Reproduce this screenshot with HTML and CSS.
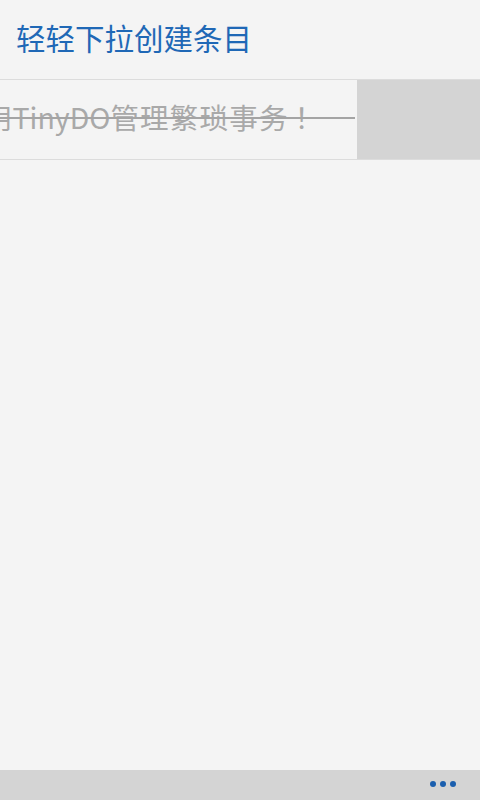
FILE: index.html
```html
<!DOCTYPE html>
<html lang="zh-CN">
<head>
<meta charset="UTF-8">
<title>TinyDO</title>
<link rel="stylesheet" href="styles.css">
</head>
<body>
<div class="app">
  <h1 class="tip">轻轻下拉创建条目</h1>
  <div class="lista">
    <div class="item">
      <div class="item-corpo feito"><span class="texto">用TinyDO<span class="cjk">管理繁琐事务</span><span class="excl">！</span></span></div>
      <div class="item-acao"></div>
    </div>
  </div>
  <div class="barra">
    <span class="mais"><i></i><i></i><i></i></span>
  </div>
</div>
</body>
</html>
```

FILE: styles.css
```css
body { margin: 0; background: #f4f4f4; font-family: "Noto Sans CJK SC", "Open Sans", sans-serif; }
.app { height: 800px; display: flex; flex-direction: column; }
.tip { margin: 0; padding: 13px 16px 0; height: 66px; font-size: 29.5px; font-weight: 400; color: #1f68b6; line-height: 48px; }
.lista { flex: 1; }
.item { display: flex; height: 79px; border-top: 1px solid #dcdcdc; border-bottom: 1px solid #dcdcdc; overflow: hidden; }
.item-corpo { flex: 0 0 357px; position: relative; overflow: hidden; display: flex; align-items: center; }
.texto { margin: 0 0 7px -16px; white-space: nowrap; font-family: "Noto Sans CJK JP", "Open Sans", sans-serif; font-size: 28.5px; color: #a9a9a9; }
.cjk { letter-spacing: 1.2px; }
.excl { margin-left: 6px; }
.feito::after { content: ""; position: absolute; left: 0; right: 2px; top: 37px; height: 2px; background: #a4a4a4; }
.item-acao { flex: 1; background: #d4d4d4; }
.barra { height: 30px; background: #d4d4d4; display: flex; justify-content: flex-end; align-items: center; padding-right: 24px; }
.mais { display: flex; gap: 4px; margin-bottom: 2px; }
.mais i { width: 6px; height: 6px; border-radius: 50%; background: #1b5fae; }
```
